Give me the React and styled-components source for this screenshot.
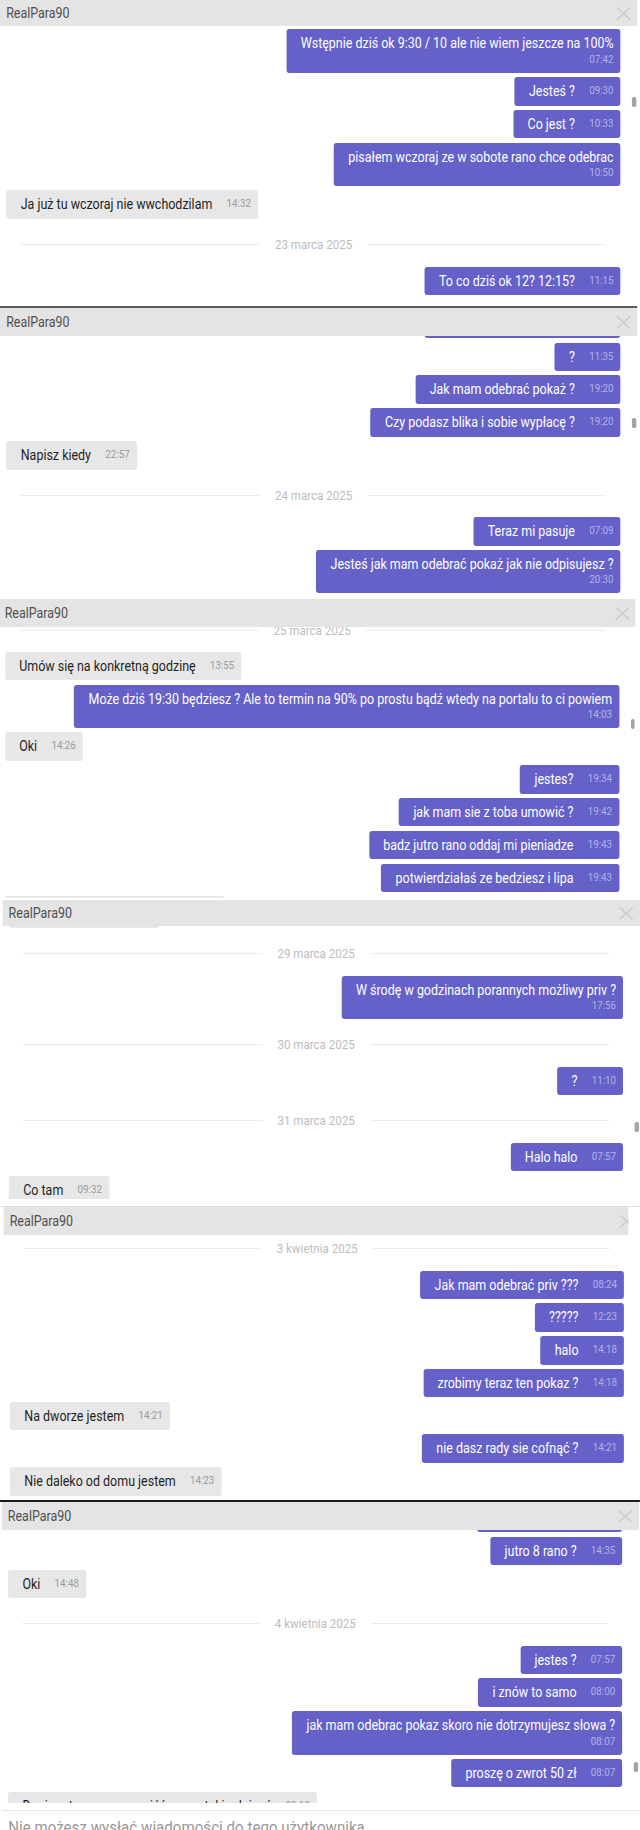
import React from 'react';
import styled, { createGlobalStyle } from 'styled-components';

// the source capture is squeezed horizontally, so the page is laid out wider and scaled back
const SCALE = 0.89;
const WIDTH = 719;

const GlobalStyle = createGlobalStyle`
  html, body {
    margin: 0;
    padding: 0;
    background: #fff;
    overflow: hidden;
  }
  body {
    font-family: Roboto, "Noto Sans", "Liberation Sans", sans-serif;
  }
`;

const Page = styled.div`
  width: ${WIDTH}px;
  height: 1830px;
  overflow: hidden;
  transform: scaleX(${SCALE});
  transform-origin: 0 0;
  background: #fff;
`;

const Frame = styled.section`
  width: ${p => (p.$clip ? `${p.$clip}px` : '100%')};
  overflow: hidden;
`;

const Window = styled.div`
  position: relative;
  width: 716px;
  margin-left: ${p => p.$dx || 0}px;
  padding-bottom: ${p => p.$after || 0}px;
  border-bottom: ${p => (p.$rule ? `2px solid ${p.$rule}` : 'none')};
`;

const Header = styled.header`
  box-sizing: border-box;
  height: ${p => p.$h}px;
  display: flex;
  align-items: center;
  justify-content: space-between;
  padding: 0 6.7px 0 6.9px;
  background: #e4e4e4;
  color: #4f4f4f;
  font-size: 14px;
`;

const Close = styled.svg`
  flex: none;
  width: 17px;
  height: 13px;
  fill: none;
  stroke: #c8c8c8;
  stroke-width: 1.3;
`;

const Viewport = styled.div`
  height: ${p => p.$h}px;
  overflow: hidden;
`;

const Thread = styled.div`
  display: flex;
  flex-direction: column;
  gap: 4.3px;
  padding: 0 18.6px 0 7.3px;
  margin-top: ${p => p.$top}px;
`;

const Bubble = styled.div`
  align-self: ${p => (p.$mine ? 'flex-end' : 'flex-start')};
  display: flex;
  flex-direction: ${p => (p.$stack ? 'column' : 'row')};
  align-items: ${p => (p.$stack ? 'flex-end' : 'center')};
  padding: 6px 8px 6px 16px;
  border-radius: 3px;
  background: ${p => (p.$mine ? '#6561c9' : '#e7e7e7')};
  color: ${p => (p.$mine ? '#ffffff' : '#1f1f1f')};
  font-size: 14px;
  line-height: 16.5px;
  white-space: nowrap;
`;

/* a message scrolled almost out of view: only its edge shows */
const Sliver = styled.div`
  align-self: ${p => (p.$mine ? 'flex-end' : 'flex-start')};
  width: ${p => p.$w}px;
  height: 28.5px;
  border-radius: 3px;
  background: ${p => (p.$mine ? '#6561c9' : '#e7e7e7')};
`;

const Time = styled.span`
  margin-left: ${p => (p.$stack ? 0 : 16)}px;
  font-size: 11px;
  line-height: ${p => (p.$stack ? 15 : 16.5)}px;
  color: ${p => (p.$mine ? 'rgba(255, 255, 255, 0.5)' : '#9b9b9b')};
`;

const DateRow = styled.div`
  box-sizing: border-box;
  height: 39px;
  padding-top: 4px;
  margin: 0 16px;
  display: flex;
  align-items: center;
  gap: 17px;
  color: #bdbdbd;
  font-size: 13px;
  white-space: nowrap;

  &::before,
  &::after {
    content: '';
    flex: 1;
    height: 1px;
    background: #ececec;
  }
`;

const Thumb = styled.div`
  position: absolute;
  right: 1.2px;
  top: ${p => p.$top}px;
  width: 4.5px;
  height: 10px;
  border-radius: 2px;
  background: #a3a3a3;
`;

const Seam = styled.div`
  height: ${p => p.$size}px;
  margin-top: ${p => p.$space || 0}px;
  background: ${p => p.$color};
`;

const Footer = styled.footer`
  margin-top: 7px;
  border-top: 1px solid #e6e6e6;
  padding: 6px 7.3px 0;
  color: #999999;
  font-size: 17px;
  line-height: 20px;
  white-space: nowrap;
`;

function Message({ mine, stack, text, time, sliver }) {
  if (sliver) return <Sliver $mine={mine} $w={sliver} />;
  return (
    <Bubble $mine={mine} $stack={stack}>
      <span>{text}</span>
      <Time $mine={mine} $stack={stack}>{time}</Time>
    </Bubble>
  );
}

const me = (text, time, stack) => ({ mine: true, text, time, stack });
const them = (text, time) => ({ mine: false, text, time });
const day = text => ({ date: text });
const edge = (mine, w) => ({ mine, sliver: w });

const panels = [
  {
    head: 26, view: 280, top: 3.3, thumb: 97, rule: '#5b5b5b',
    items: [
      me('Wstępnie dziś ok 9:30 / 10 ale nie wiem jeszcze na 100%', '07:42', true),
      me('Jesteś ?', '09:30'),
      me('Co jest ?', '10:33'),
      me('pisałem wczoraj ze w sobote rano chce odebrac', '10:50', true),
      them('Ja już tu wczoraj nie wwchodzilam', '14:32'),
      day('23 marca 2025'),
      me('To co dziś ok 12? 12:15?', '11:15'),
    ],
  },
  {
    head: 28, view: 263, top: -26.2, thumb: 110,
    items: [
      me('To co dziś ok 12? 12:15?', '11:15'),
      me('?', '11:35'),
      me('Jak mam odebrać pokaż ?', '19:20'),
      me('Czy podasz blika i sobie wypłacę ?', '19:20'),
      them('Napisz kiedy', '22:57'),
      day('24 marca 2025'),
      me('Teraz mi pasuje', '07:09'),
      me('Jesteś jak mam odebrać pokaż jak nie odpisujesz ?', '20:30', true),
    ],
  },
  {
    head: 28, view: 270.5, top: -18.5, thumb: 120, dx: -1.7, after: 2.5,
    items: [
      day('25 marca 2025'),
      them('Umów się na konkretną godzinę', '13:55'),
      me('Może dziś 19:30 będziesz ? Ale to termin na 90% po prostu bądź wtedy na portalu to ci powiem', '14:03', true),
      them('Oki', '14:26'),
      me('jestes?', '19:34'),
      me('jak mam sie z toba umowić ?', '19:42'),
      me('badz jutro rano oddaj mi pieniadze', '19:43'),
      me('potwierdziałaś ze bedziesz i lipa', '19:43'),
      edge(false, 246),
    ],
  },
  {
    head: 26, view: 273, top: -26.5, thumb: 221.7, dx: 2.8,
    items: [
      edge(false, 168.5),
      day('29 marca 2025'),
      me('W środę w godzinach porannych możliwy priv ?', '17:56', true),
      day('30 marca 2025'),
      me('?', '11:10'),
      day('31 marca 2025'),
      me('Halo halo', '07:57'),
      them('Co tam', '09:32'),
    ],
  },
  {
    head: 28, view: 265, top: -7.8, dx: 4, clip: 706.3,
    items: [
      day('3 kwietnia 2025'),
      me('Jak mam odebrać priv ???', '08:24'),
      me('?????', '12:23'),
      me('halo', '14:18'),
      me('zrobimy teraz ten pokaz ?', '14:18'),
      them('Na dworze jestem', '14:21'),
      me('nie dasz rady sie cofnąć ?', '14:21'),
      them('Nie daleko od domu jestem', '14:23'),
    ],
  },
  {
    head: 28, view: 273, top: -26.1, thumb: 259.7, dx: 1.9, footer: true,
    items: [
      edge(true, 163),
      me('jutro 8 rano ?', '14:35'),
      them('Oki', '14:48'),
      day('4 kwietnia 2025'),
      me('jestes ?', '07:57'),
      me('i znów to samo', '08:00'),
      me('jak mam odebrac pokaz skoro nie dotrzymujesz słowa ?', '08:07', true),
      me('proszę o zwrot 50 zł', '08:07'),
      them('Dopiero teraz mogę wejść na portal i odpisać', '09:12'),
    ],
  },
];

function ChatWindow({ panel }) {
  return (
    <Frame $clip={panel.clip}>
      <Window $dx={panel.dx} $after={panel.after} $rule={panel.rule}>
        <Header $h={panel.head}>
          <span>RealPara90</span>
          <Close viewBox="0 0 17 13" preserveAspectRatio="none">
            <path d="M1 0.5 L16 12.5 M16 0.5 L1 12.5" />
          </Close>
        </Header>
        <Viewport $h={panel.view}>
          <Thread $top={panel.top}>
            {panel.items.map((item, i) =>
              item.date ? (
                <DateRow key={i}>{item.date}</DateRow>
              ) : (
                <Message key={i} {...item} />
              )
            )}
          </Thread>
        </Viewport>
        {panel.thumb && <Thumb $top={panel.thumb} />}
        {panel.footer && <Footer>Nie możesz wysłać wiadomości do tego użytkownika</Footer>}
      </Window>
    </Frame>
  );
}

export default function App() {
  return (
    <>
      <GlobalStyle />
      <Page>
        <ChatWindow panel={panels[0]} />
        <ChatWindow panel={panels[1]} />
        <ChatWindow panel={panels[2]} />
        <ChatWindow panel={panels[3]} />
        <Seam $space={7} $size={1} $color="#dedede" />
        <ChatWindow panel={panels[4]} />
        <Seam $size={2} $color="#1c1c1c" />
        <ChatWindow panel={panels[5]} />
      </Page>
    </>
  );
}
